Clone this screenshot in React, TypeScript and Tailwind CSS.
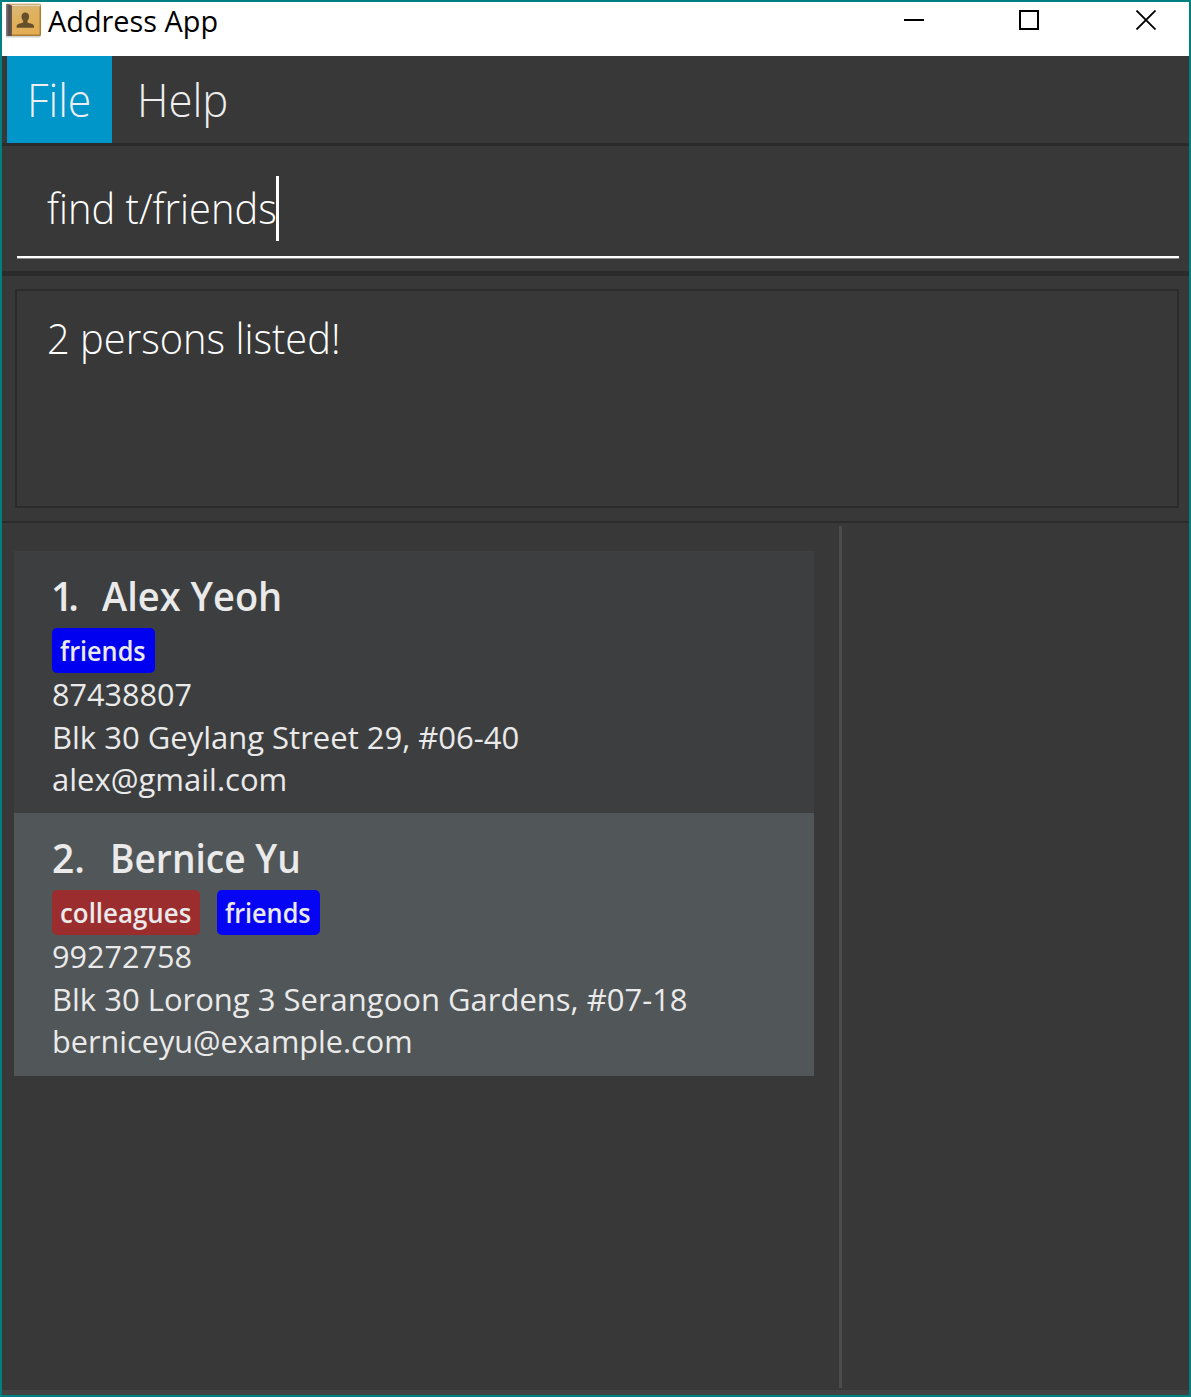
import React from "react";

type Tag = { label: string; color: string; fit: string };
type Person = {
  index: number;
  name: string;
  tags: Tag[];
  phone: string;
  address: string;
  email: string;
  card: string;
  indexFit: string;
  nameFit: string;
  emailFit: string;
};

const people: Person[] = [
  {
    index: 1,
    name: "Alex Yeoh",
    tags: [{ label: "friends", color: "bg-[#0000f0] w-[102.5px]", fit: "scale-x-[0.935]" }],
    phone: "87438807",
    address: "Blk 30 Geylang Street 29, #06-40",
    email: "alex@gmail.com",
    card: "bg-[#3c3e3f] h-[262px]",
    indexFit: "w-[51px] -ml-px tracking-[-5px]",
    nameFit: "scale-x-[0.975]",
    emailFit: "scale-x-100",
  },
  {
    index: 2,
    name: "Bernice Yu",
    tags: [
      { label: "colleagues", color: "bg-[#9b2d2f] w-[148px]", fit: "scale-x-[0.958]" },
      { label: "friends", color: "bg-[#0505f3] w-[102.5px]", fit: "scale-x-[0.935]" },
    ],
    phone: "99272758",
    address: "Blk 30 Lorong 3 Serangoon Gardens, #07-18",
    email: "berniceyu@example.com",
    card: "bg-[#515658] h-[263px]",
    indexFit: "w-[58px]",
    nameFit: "scale-x-[0.952]",
    emailFit: "scale-x-[0.989]",
  },
];

function BookIcon() {
  return (
    <svg width="38" height="38" viewBox="0 0 38 38" className="block">
      <defs>
        <linearGradient id="cover" x1="0" y1="0" x2="0.3" y2="1">
          <stop offset="0" stopColor="#d9b878" />
          <stop offset="0.5" stopColor="#e0b05c" />
          <stop offset="1" stopColor="#e2ad55" />
        </linearGradient>
        <linearGradient id="spine" x1="0" y1="0" x2="1" y2="0">
          <stop offset="0" stopColor="#8a7f80" />
          <stop offset="0.5" stopColor="#554a4b" />
          <stop offset="1" stopColor="#6b5a4a" />
        </linearGradient>
      </defs>
      <rect x="2" y="33" width="34.500" height="2.500" rx="1" fill="#cfcfcf" />
      <rect x="2" y="1.800" width="35" height="32.200" rx="1.500" fill="#ab7d33" />
      <rect x="3" y="2.500" width="33.300" height="2" fill="#e9dcc0" />
      <rect x="8" y="4.500" width="27.500" height="28" fill="url(#cover)" />
      <path d="M2 3Q2 1.800 3 1.800L8 3.500v30.500H3Q2 34 2 32.800z" fill="url(#spine)" />
      <path
        d="M23.300 10.500c2.500 0 3.800 1.700 3.800 4 0 1.900-.7 3.300-1.700 4.200v1.700c2.500 1 6.600 1.100 6.600 4v1.400H14.600v-1.400c0-2.900 4.100-3 6.600-4v-1.700c-1-.9-1.700-2.300-1.700-4.200 0-2.300 1.300-4 3.800-4z"
        transform="translate(-2 0)"
        fill="#66502b"
      />
    </svg>
  );
}

function TitleBar() {
  return (
    <header className="flex h-[54px] shrink-0 items-start bg-white pl-[2px] text-black">
      <BookIcon />
      <h1 className="ml-[6px] w-[180px] origin-left scale-x-[1.012] text-[28.5px] leading-[39px]">Address App</h1>
      <svg width="252" height="20" viewBox="0 0 252 20" className="mt-2 mr-[33px] ml-auto" fill="none" stroke="#000" strokeWidth="2">
        <path d="M0 10h20" />
        <path d="M116 1h18v18h-18z" />
        <path d="M232.500 .5l19 19M251.500 .5l-19 19" strokeWidth="1.800" />
      </svg>
    </header>
  );
}

function PersonCard({ person }: { person: Person }) {
  return (
    <li className={`px-[38px] pt-[18px] text-[#eaeaea] ${person.card}`}>
      <h2 className="flex text-[39px] leading-[54px] font-semibold whitespace-nowrap">
        <span className={person.indexFit}>{person.index}.</span>
        <span className={`origin-left ${person.nameFit}`}>{person.name}</span>
      </h2>
      <div className="mt-[5px] flex gap-[17px]">
        {person.tags.map((tag) => (
          <span key={tag.label} className={`h-[45px] rounded-[5px] pl-[7.500px] text-[27px] leading-[45px] font-semibold ${tag.color}`}>
            <span className={`inline-block origin-left ${tag.fit}`}>{tag.label}</span>
          </span>
        ))}
      </div>
      <div className="text-[31px] leading-[42.7px] whitespace-nowrap">
        <p className="origin-left scale-x-[0.987]">{person.phone}</p>
        <p>{person.address}</p>
        <p className={`origin-left ${person.emailFit}`}>{person.email}</p>
      </div>
    </li>
  );
}

export default function App() {
  return (
    <div className="flex h-[1397px] w-[1191px] flex-col overflow-hidden border-2 border-[#008080] bg-[#383838] font-['Open_Sans','Noto_Sans',sans-serif]">
      <TitleBar />
      <nav className="flex h-[90px] shrink-0 border-b-[3px] border-[#2b2b2b] pl-[5px] text-[46px] leading-[87px] font-light text-[#eeeeee]">
        <button className="h-[87px] w-[105px] bg-[#0096c9] pl-5 text-left">
          <span className="inline-block origin-left scale-x-[0.93]">File</span>
        </button>
        <button className="h-[87px] pl-[25px] text-left">
          <span className="inline-block origin-left scale-x-[0.95]">Help</span>
        </button>
      </nav>
      <section className="h-[130px] shrink-0 border-b-[5px] border-[#2b2b2b] pr-[10px] pl-[15px]">
        <div className="flex h-[112px] items-center border-b-2 border-white pl-[30px] text-[43px] leading-[64px] font-light text-white shadow-[0_1px_0_#858585]">
          <span className="mt-[14px] w-[229px] whitespace-nowrap">
            <span className="inline-block origin-left scale-x-[0.927]">find t/friends</span>
          </span>
          <i className="mt-[14px] h-[65px] w-[3px] bg-white" />
        </div>
      </section>
      <section className="h-[247px] shrink-0 border-b-2 border-[#2b2b2b] pt-[13px] pr-[10px] pl-[13px]">
        <div className="h-[219px] border-2 border-[#2b2b2b] pt-[15px] pl-[30px] text-[43px] leading-[64px] font-light text-white">
          <span className="inline-block origin-left scale-x-[0.926]">2 persons listed!</span>
        </div>
      </section>
      <main className="flex min-h-0 grow border-b-[5px] border-[#434343] pt-[3px] pb-[2px]">
        <ul className="mt-[25px] mr-[25px] ml-3 w-[800px]">
          {people.map((person) => (
            <PersonCard key={person.index} person={person} />
          ))}
        </ul>
        <div className="w-[3px] bg-[#4c4c4c]" />
      </main>
    </div>
  );
}
